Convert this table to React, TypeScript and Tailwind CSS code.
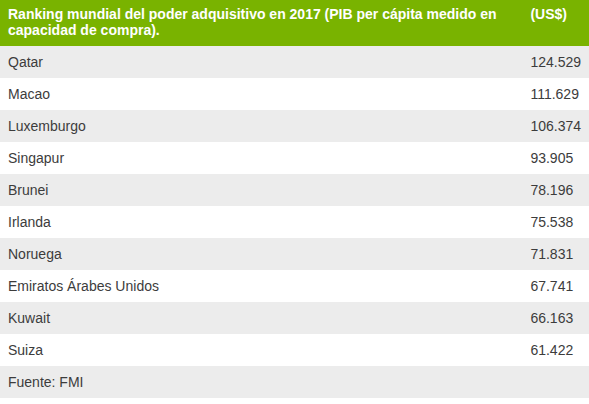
import React from "react";

// Ranking rows: country and PPP GDP per capita
const rows: { country: string; value: string }[] = [
  { country: "Qatar", value: "124.529" },
  { country: "Macao", value: "111.629" },
  { country: "Luxemburgo", value: "106.374" },
  { country: "Singapur", value: "93.905" },
  { country: "Brunei", value: "78.196" },
  { country: "Irlanda", value: "75.538" },
  { country: "Noruega", value: "71.831" },
  { country: "Emiratos Árabes Unidos", value: "67.741" },
  { country: "Kuwait", value: "66.163" },
  { country: "Suiza", value: "61.422" },
];

export default function App() {
  return (
    <div className="w-[589px] bg-white font-['Liberation_Sans',Arial,sans-serif] text-sm text-[#3c3c3c]">
      <table className="w-full border-collapse">
        <thead className="bg-[#79b300] text-left text-white">
          <tr className="h-[46px]">
            <th className="px-2 py-1.5 align-top font-bold leading-4">
              Ranking mundial del poder adquisitivo en 2017 (PIB per cápita medido en capacidad de compra).
            </th>
            <th className="w-[65px] px-2 py-1.5 align-top font-bold leading-4">(US$)</th>
          </tr>
        </thead>
        <tbody>
          {rows.map((row, i) => (
            <tr key={row.country} className={`h-8 ${i % 2 === 0 ? "bg-[#ececec]" : "bg-white"}`}>
              <td className="px-2 align-middle">{row.country}</td>
              <td className="px-2 align-middle">{row.value}</td>
            </tr>
          ))}
          <tr className="h-8 bg-[#ececec]">
            <td colSpan={2} className="px-2 align-middle">
              Fuente: FMI
            </td>
          </tr>
        </tbody>
      </table>
    </div>
  );
}
